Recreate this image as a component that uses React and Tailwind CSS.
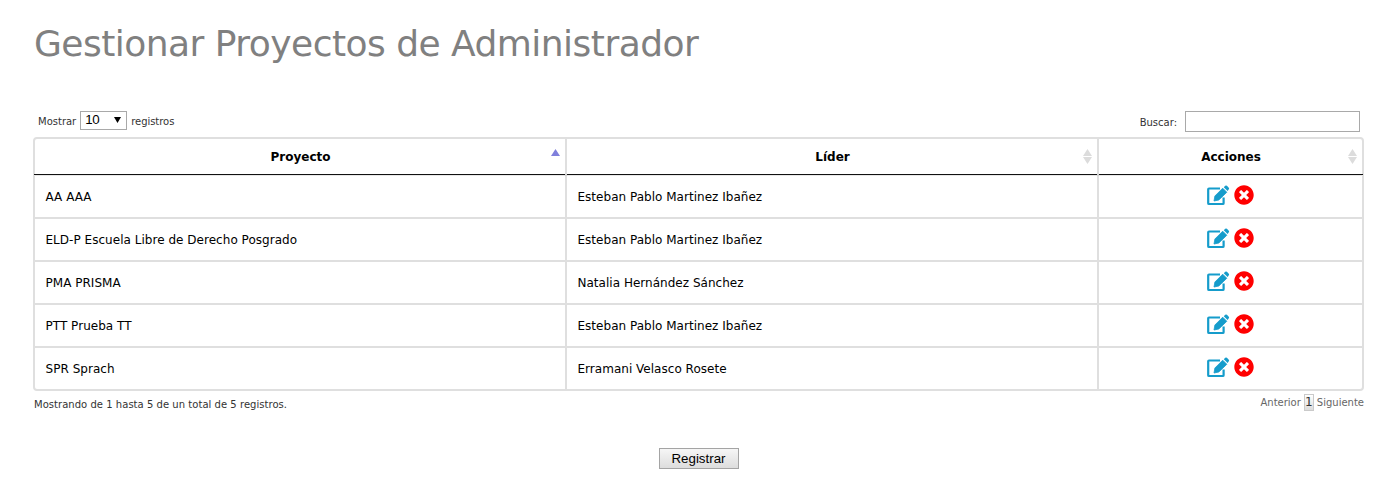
import { FaTimesCircle } from "react-icons/fa";

const rows = [
  ["AA AAA", "Esteban Pablo Martinez Ibañez"],
  ["ELD-P Escuela Libre de Derecho Posgrado", "Esteban Pablo Martinez Ibañez"],
  ["PMA PRISMA", "Natalia Hernández Sánchez"],
  ["PTT Prueba TT", "Esteban Pablo Martinez Ibañez"],
  ["SPR Sprach", "Erramani Velasco Rosete"],
];

const columns = "grid grid-cols-[532px_532px_263px]";

function SortIcon({ active }) {
  return (
    <svg className="absolute right-[5px] top-[10px]" width="9" height="15" viewBox="0 0 9 15">
      <path d="M4.5 0 9 7H0z" fill={active ? "#8080dc" : "#dcdcdc"} />
      {!active && <path d="M0 8h9l-4.500 7z" fill="#dcdcdc" />}
    </svg>
  );
}

function EditIcon() {
  return (
    <svg width="23" height="21" viewBox="0 0 23 21" fill="none">
      <path d="M13 3.500H2Q1.200 3.500 1.200 4.300V18.200Q1.200 19 2 19H15.800Q16.600 19 16.600 18.200V12.500" stroke="#159ccb" strokeWidth="2.200" />
      <path d="M15.700 3.200 19.800 7.300 11.800 15 7 16 7.900 11z" fill="#159ccb" stroke="#159ccb" strokeWidth="0.800" strokeLinejoin="round" />
      <path d="M16.800 2.200 18.200 0.800Q19 0 19.900 0.800L21.800 2.700Q22.500 3.500 21.800 4.300L20.600 5.900z" fill="#159ccb" />
    </svg>
  );
}

function HeaderCell({ children, active, last }) {
  return (
    <div className={last ? "relative flex h-[35px] items-center justify-center pl-px" : "relative flex h-[35px] items-center justify-center border-r-2 border-[#dfdfdf] pl-px"}>
      <span>{children}</span>
      <SortIcon active={active} />
    </div>
  );
}

function HeaderRule() {
  return (
    <div className={`${columns} h-[2px]`}>
      <div className="-ml-px flex flex-col border-r-2 border-[#d0d0d0]">
        <div className="h-px bg-[#111111]" />
        <div className="h-px bg-[#e8e8e8]" />
      </div>
      <div className="flex flex-col border-r-2 border-[#d0d0d0]">
        <div className="h-px bg-[#111111]" />
        <div className="h-px bg-[#e8e8e8]" />
      </div>
      <div className="mr-[-1px] flex flex-col">
        <div className="h-px bg-[#111111]" />
        <div className="h-px bg-[#e8e8e8]" />
      </div>
    </div>
  );
}

export default function App() {
  return (
    <div className="h-[495px] w-[1396px] overflow-hidden bg-white pl-[33px] font-['Verdana','DejaVu_Sans',sans-serif] text-black">
      <h1 className="pl-px pt-[20px] text-[36px] leading-[48px] tracking-[-0.530px] text-[#808080]">Gestionar Proyectos de Administrador</h1>

      <div className="mt-[42px] flex h-[27px] w-[1331px] justify-between pl-[5px] pr-1 text-[10px] text-[#333333]">
        <label className="flex h-[20px] items-center">
          <span className="pt-[2px]">Mostrar</span>
          <span className="ml-1 mr-1 flex h-[19px] w-[47px] items-center justify-between border border-[#a9a9a9] pl-1 pr-[5px] font-['Liberation_Sans',sans-serif] text-[13.33px] text-black">
            <span className="tracking-[-0.300px]">10</span>
            <svg width="7" height="6" viewBox="0 0 7 6"><path d="M0 0h7L3.500 6z" fill="#000" /></svg>
          </span>
          <span className="pt-[2px] tracking-[-0.050px]">registros</span>
        </label>
        <label className="flex h-[22px] items-center gap-2">
          <span className="pt-[2px]">Buscar:</span>
          <input className="h-[21px] w-[175px] border border-[#a9a9a9] bg-white outline-none" />
        </label>
      </div>

      <div className="w-[1331px] rounded-[4px] border-2 border-[#dfdfdf] text-[12px]">
        <div className={`${columns} text-[12px] font-bold`}>
          <HeaderCell active>Proyecto</HeaderCell>
          <HeaderCell>Líder</HeaderCell>
          <HeaderCell last>Acciones</HeaderCell>
        </div>
        <HeaderRule />
        {rows.map(([project, leader], i) => (
          <div key={project} className={`${columns} ${i === 0 ? "h-[41px]" : "h-[43px] border-t-2 border-[#dfdfdf]"}`}>
            <div className="flex items-center border-r-2 border-[#dfdfdf] pl-[10.500px] tracking-[0.030px]">{project}</div>
            <div className="flex items-center border-r-2 border-[#dfdfdf] pl-[10.500px] tracking-[0.020px]">{leader}</div>
            <div className="flex items-center justify-center gap-1 pb-[2px]">
              <EditIcon />
              <FaTimesCircle className="mb-px h-5 w-5 text-[#ff0000]" />
            </div>
          </div>
        ))}
      </div>

      <div className="flex h-[24px] w-[1331px] justify-between text-[10px] text-[#333333]">
        <span className="pl-px pt-[6px] leading-[15px] tracking-[0.035px]">Mostrando de 1 hasta 5 de un total de 5 registros.</span>
        <div className="flex h-[22px] items-center gap-[3px] text-[#666666]">
          <span>Anterior</span>
          <span className="flex h-[17px] w-[10px] items-center justify-center border border-[#cacaca] bg-linear-to-b from-white to-[#dcdcdc] text-[12px] text-[#333333]">1</span>
          <span>Siguiente</span>
        </div>
      </div>

      <div className="mt-[33px] flex w-[1331px] justify-center">
        <button className="h-[21px] w-[80px] border border-[#a4a4a4] bg-linear-to-b from-[#f6f6f6] to-[#dddddd] font-['Liberation_Sans',sans-serif] text-[13.33px] leading-[19px]">Registrar</button>
      </div>
    </div>
  );
}
